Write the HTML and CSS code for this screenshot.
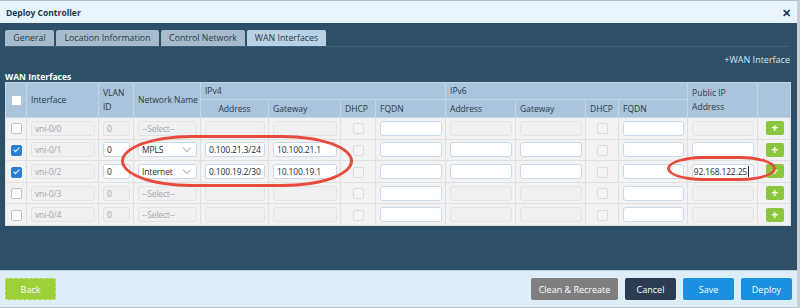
FILE: index.html
```html
<!DOCTYPE html>
<html lang="en">
<head>
  <meta charset="UTF-8">
  <title>Deploy Controller</title>
  <link rel="stylesheet" href="styles.css">
</head>
<body>
  <div class="dialog">
    <div class="dialog-head">
      <span class="title">Deploy Controller</span>
      <span class="close">&#x2715;</span>
    </div>

    <div class="dialog-body">
      <div class="tabs">
        <div class="tab">General</div>
        <div class="tab">Location Information</div>
        <div class="tab">Control Network</div>
        <div class="tab active">WAN Interfaces</div>
      </div>

      <div class="toolbar"><span class="add-link">+WAN Interface</span></div>
      <div class="section-label">WAN Interfaces</div>

      <div class="grid-wrap">
        <table class="wan">
          <colgroup>
            <col style="width:21px"><col style="width:72px"><col style="width:35px"><col style="width:67px">
            <col style="width:68px"><col style="width:72px"><col style="width:35px"><col style="width:70px">
            <col style="width:70px"><col style="width:70px"><col style="width:33px"><col style="width:69px">
            <col style="width:70px"><col style="width:33px">
          </colgroup>
          <thead>
            <tr class="h1">
              <th rowspan="2" class="center"><span class="cb"></span></th>
              <th rowspan="2">Interface</th>
              <th rowspan="2">VLAN<br>ID</th>
              <th rowspan="2">Network Name</th>
              <th colspan="4">IPv4</th>
              <th colspan="4">IPv6</th>
              <th rowspan="2">Public IP<br>Address</th>
              <th rowspan="2"></th>
            </tr>
            <tr class="h2">
              <th class="center">Address</th>
              <th>Gateway</th>
              <th>DHCP</th>
              <th>FQDN</th>
              <th>Address</th>
              <th>Gateway</th>
              <th>DHCP</th>
              <th>FQDN</th>
            </tr>
          </thead>
          <tbody>
            <tr>
              <td class="center"><span class="cb"></span></td>
              <td><div class="field off">vni-0/0</div></td>
              <td><div class="field off">0</div></td>
              <td><div class="field off">--Select--</div></td>
              <td><div class="field off"></div></td>
              <td><div class="field off"></div></td>
              <td class="center"><span class="cb off"></span></td>
              <td><div class="field"></div></td>
              <td><div class="field off"></div></td>
              <td><div class="field off"></div></td>
              <td class="center"><span class="cb off"></span></td>
              <td><div class="field"></div></td>
              <td><div class="field off"></div></td>
              <td class="center"><span class="plus">+</span></td>
            </tr>
            <tr>
              <td class="center"><span class="cb on"></span></td>
              <td><div class="field off">vni-0/1</div></td>
              <td><div class="field">0</div></td>
              <td><div class="field select">MPLS<span class="chev"></span></div></td>
              <td><div class="field">0.100.21.3/24</div></td>
              <td><div class="field">10.100.21.1</div></td>
              <td class="center"><span class="cb off"></span></td>
              <td><div class="field"></div></td>
              <td><div class="field"></div></td>
              <td><div class="field"></div></td>
              <td class="center"><span class="cb off"></span></td>
              <td><div class="field"></div></td>
              <td><div class="field"></div></td>
              <td class="center"><span class="plus">+</span></td>
            </tr>
            <tr>
              <td class="center"><span class="cb on"></span></td>
              <td><div class="field off">vni-0/2</div></td>
              <td><div class="field">0</div></td>
              <td><div class="field select">Internet<span class="chev"></span></div></td>
              <td><div class="field">0.100.19.2/30</div></td>
              <td><div class="field">10.100.19.1</div></td>
              <td class="center"><span class="cb off"></span></td>
              <td><div class="field"></div></td>
              <td><div class="field"></div></td>
              <td><div class="field"></div></td>
              <td class="center"><span class="cb off"></span></td>
              <td><div class="field"></div></td>
              <td><div class="field typing"><span>192.168.122.25</span><span class="caret"></span></div></td>
              <td class="center"><span class="plus">+</span></td>
            </tr>
            <tr>
              <td class="center"><span class="cb"></span></td>
              <td><div class="field off">vni-0/3</div></td>
              <td><div class="field off">0</div></td>
              <td><div class="field off">--Select--</div></td>
              <td><div class="field off"></div></td>
              <td><div class="field off"></div></td>
              <td class="center"><span class="cb off"></span></td>
              <td><div class="field"></div></td>
              <td><div class="field off"></div></td>
              <td><div class="field off"></div></td>
              <td class="center"><span class="cb off"></span></td>
              <td><div class="field"></div></td>
              <td><div class="field off"></div></td>
              <td class="center"><span class="plus">+</span></td>
            </tr>
            <tr>
              <td class="center"><span class="cb"></span></td>
              <td><div class="field off">vni-0/4</div></td>
              <td><div class="field off">0</div></td>
              <td><div class="field off">--Select--</div></td>
              <td><div class="field off"></div></td>
              <td><div class="field off"></div></td>
              <td class="center"><span class="cb off"></span></td>
              <td><div class="field"></div></td>
              <td><div class="field off"></div></td>
              <td><div class="field off"></div></td>
              <td class="center"><span class="cb off"></span></td>
              <td><div class="field"></div></td>
              <td><div class="field off"></div></td>
              <td class="center"><span class="plus">+</span></td>
            </tr>
          </tbody>
        </table>

        <!-- callout rings drawn over the grid -->
        <div class="ring ring-ipv4"></div>
        <div class="ring ring-public"></div>
      </div>
    </div>

    <div class="dialog-foot">
      <button class="btn back">Back</button>
      <div class="actions">
        <button class="btn grey">Clean &amp; Recreate</button>
        <button class="btn dark">Cancel</button>
        <button class="btn blue">Save</button>
        <button class="btn blue">Deploy</button>
      </div>
    </div>
  </div>
</body>
</html>
```

FILE: styles.css
```css
body {
  margin: 0;
  background: #c9ced3;
  font-family: 'Open Sans', sans-serif;
  font-size: 8.5px;
  color: #2b3a4a;
}
.dialog {
  width: 797px;
  height: 308px;
  display: flex;
  flex-direction: column;
  background: #2d5068;
}
.dialog-head {
  height: 22px;
  border-top: 1px solid #b8c2ca;
  background: #e8f4fd;
  display: flex;
  align-items: center;
  justify-content: space-between;
  padding: 0 6px 0 6px;
}
.title {
  font-weight: bold;
  font-size: 8.5px;
  color: #23384a;
}
.close {
  font-size: 11px;
  font-weight: bold;
  color: #1f3546;
}
.dialog-body {
  flex: 1;
  padding: 7px 7px 0 5px;
}
.tabs {
  display: flex;
  gap: 2px;
  height: 16px;
  border-bottom: 1px solid #3e6178;
}
.tab {
  background: #a6bccc;
  line-height: 16px;
  border-radius: 2px 2px 0 0;
  color: #283a4a;
  font-size: 8.8px;
  text-align: center;
  white-space: nowrap;
}
.tab:nth-child(1) { width: 49px; }
.tab:nth-child(2) { width: 103px; }
.tab:nth-child(3) { width: 84px; }
.tab:nth-child(4) { width: 79px; }
.tab.active {
  background: #b8d1e5;
}
.toolbar {
  display: flex;
  justify-content: flex-end;
  height: 20px;
  align-items: center;
  margin-top: 2px;
}
.add-link {
  color: #dce8f2;
  font-size: 9px;
}
.section-label {
  color: #fff;
  font-weight: bold;
  line-height: 10px;
  margin-top: 3px;
}
.grid-wrap {
  position: relative;
}
.wan {
  width: 785px;
  table-layout: fixed;
  border-collapse: collapse;
  background: #f2f2f2;
}
.wan th {
  background: #a9c4db;
  font-weight: normal;
  text-align: left;
  padding: 0 4px;
  border: 1px solid #c3d6e6;
  color: #2b3a4a;
  line-height: 14px;
  white-space: nowrap;
}
.wan .h1 th {
  height: 16px;
}
.wan .h2 th {
  height: 17px;
}
.wan .center {
  text-align: center;
}
.wan td {
  height: 20.6px;
  padding: 0 3px 0 4px;
  border: 1px solid #dfdfdf;
}
.field {
  height: 15px;
  box-sizing: border-box;
  border: 1px solid #c9d9e8;
  border-radius: 3px;
  background: #fff;
  padding: 0 2px 0 3px;
  line-height: 13px;
  color: #1e2a36;
  letter-spacing: -0.15px;
  white-space: nowrap;
  overflow: hidden;
  position: relative;
}
.field.off {
  background: #f0f0f0;
  border-color: #dde4ea;
  color: #a0a8b0;
}
.field.select .chev {
  position: absolute;
  right: 6px;
  top: 2px;
  width: 5px;
  height: 5px;
  border-right: 1px solid #b0b6bc;
  border-bottom: 1px solid #b0b6bc;
  transform: rotate(45deg);
}
.field.typing {
  display: flex;
  justify-content: flex-end;
  padding: 0 4px 0 0;
}
.caret {
  flex: none;
  width: 1px;
  height: 11px;
  margin: 1px 0 0 1px;
  background: #1e2a36;
}
.cb {
  display: inline-block;
  width: 9px;
  height: 9px;
  border: 1px solid #b9c4cc;
  border-radius: 2px;
  background: #fff;
  vertical-align: middle;
  position: relative;
}
.cb.off {
  background: #f4f4f4;
  border-color: #d8dcdf;
}
.cb.on {
  background: #2b7fd2;
  border-color: #2b7fd2;
}
.cb.on::after {
  content: "";
  position: absolute;
  left: 3px;
  top: 0px;
  width: 2px;
  height: 5px;
  border-right: 1.5px solid #fff;
  border-bottom: 1.5px solid #fff;
  transform: rotate(45deg);
}
.plus {
  display: inline-block;
  width: 18px;
  height: 14px;
  background: #8cc63e;
  border-radius: 2px;
  color: #fff;
  font-weight: bold;
  font-size: 12px;
  line-height: 14px;
  text-align: center;
  vertical-align: middle;
}
.ring {
  position: absolute;
  border: 3px solid #e84a3d;
  box-sizing: border-box;
}
.ring-ipv4 {
  left: 116px;
  top: 53px;
  width: 232px;
  height: 52px;
  border-radius: 70px / 26px;
}
.ring-public {
  left: 662px;
  top: 74px;
  width: 109px;
  height: 25px;
  border-radius: 36px / 12.5px;
}
.dialog-foot {
  height: 36px;
  background: #deeef9;
  border-top: 1px solid #b9cbd8;
  border-bottom: 1px solid #b8bec4;
  display: flex;
  align-items: center;
  justify-content: space-between;
  padding: 0 5px;
}
.actions {
  display: flex;
  gap: 7px;
}
.btn {
  height: 22px;
  border: none;
  border-radius: 2px;
  color: #fff;
  font-family: 'Open Sans', sans-serif;
  font-size: 9px;
  padding: 0;
  width: 51px;
}
.btn.back {
  background: #9dcf38;
  border: 1px dashed #c0e27a;
}
.btn.grey {
  background: #7f7f7f;
  width: 87px;
}
.btn.dark {
  background: #2c3d53;
}
.btn.blue {
  background: #1b90de;
}
```
